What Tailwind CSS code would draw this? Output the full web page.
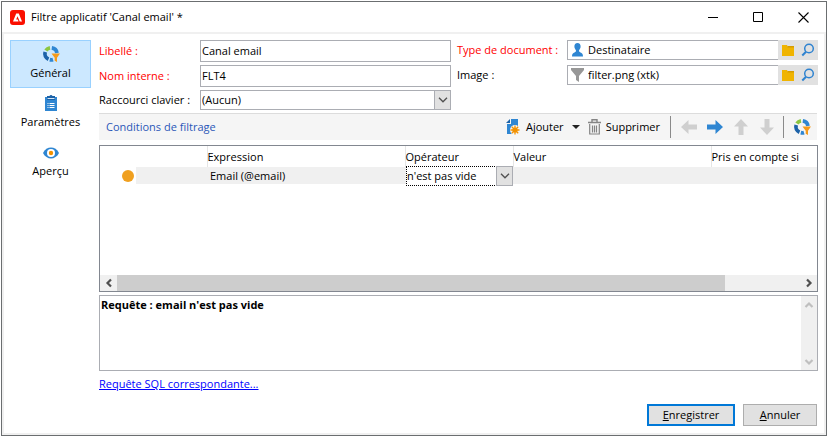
<!DOCTYPE html>
<html lang="fr">
<head>
<meta charset="utf-8">
<meta name="viewport" content="width=device-width, initial-scale=1">
<title>Filtre applicatif 'Canal email'</title>
<script src="https://cdn.jsdelivr.net/npm/@tailwindcss/browser@4"></script>
</head>
<body class="flex min-h-screen flex-col bg-white p-px pb-[2px] text-[11px] leading-4 text-black font-['Open_Sans','Noto_Sans',sans-serif]">
<svg class="hidden" aria-hidden="true">
  <symbol id="folder" viewBox="0 0 12 11"><path d="M0 0h5l1 2h6v9H0z" fill="#f0b400"/><path d="M5.500 1h6.500v1.500H5.500z" fill="#d69c00"/></symbol>
  <symbol id="lens" viewBox="0 0 14 14"><circle cx="8" cy="5.500" r="4.300" fill="none" stroke="#2f83d0" stroke-width="1.500"/><path d="M5 8.700 1.300 12.500" stroke="#2f83d0" stroke-width="2"/></symbol>
  <symbol id="ring" viewBox="0 0 18 18">
    <g fill="none" stroke-width="3.800">
      <path d="M9.800 2.900A6 6 0 0 1 14.900 8" stroke="#2f86d2"/>
      <path d="M3.900 5.600A6 6 0 0 1 8 2.900" stroke="#8cc63f"/>
      <path d="M3.200 7A6 6 0 0 0 6.500 14.300" stroke="#1c62a8"/>
      <path d="M7.800 14.700A6 6 0 0 0 11 14.600" stroke="#2f86d2"/>
    </g>
    <path d="M9.500 8.500H18l-3 4.200V17l-2.300-1.300v-3z" fill="#f59a1b"/>
  </symbol>
  <symbol id="arrow" viewBox="0 0 16 16"><path d="M0 5.500h8.500V1L16 8l-7.500 7v-4.500H0z" fill="currentColor"/></symbol>
  <symbol id="chevron" viewBox="0 0 10 6"><path d="m1 .8 4 4 4-4" fill="none" stroke="currentColor" stroke-width="1.300"/></symbol>
  <symbol id="bold-chevron" viewBox="0 0 10 8"><path d="m1.500 2 3.500 3.500 3.500-3.500" fill="none" stroke="currentColor" stroke-width="2.200"/></symbol>
</svg>

<main class="flex grow flex-col border border-[#6b6e70]">
  <header class="flex h-[30px] items-center pl-2">
    <svg class="mr-[6px] h-[15px] w-[15px]" viewBox="0 0 15 15" aria-hidden="true"><rect width="15" height="15" rx="3" fill="#fa0f00"/><path d="M3 11.500 6.200 3.500h2.600l3.200 8H9.700L7.500 6.200 6.200 9.500h1.600l.8 2z" fill="#fff"/></svg>
    <h1 class="grow">Filtre applicatif 'Canal email' *</h1>
    <button class="flex h-full w-[45px] items-center justify-center" aria-label="Réduire"><svg class="h-[11px] w-[11px]" viewBox="0 0 11 11"><path d="M0 5.500h10" stroke="#000"/></svg></button>
    <button class="flex h-full w-[45px] items-center justify-center" aria-label="Agrandir"><svg class="h-[11px] w-[11px]" viewBox="0 0 11 11"><path d="M.5.500h9v9h-9z" fill="none" stroke="#000"/></svg></button>
    <button class="flex h-full w-[45px] items-center justify-center" aria-label="Fermer"><svg class="h-[11px] w-[11px]" viewBox="0 0 11 11"><path d="m.5.500 10 10m0-10-10 10" stroke="#000" stroke-width="1.100"/></svg></button>
  </header>

  <div class="flex grow border-2 border-[#f0f0f0] px-[6px] pt-[6px] pb-[7px]">
    <nav class="mr-2 flex w-[81px] shrink-0 flex-col gap-px">
      <button class="flex h-12 flex-col items-center justify-end gap-[2px] border border-[#99d1ff] bg-[#cce8ff] pb-[6px]">
        <svg class="h-[18px] w-[18px]"><use href="#ring"/></svg>Général
      </button>
      <button class="flex h-12 flex-col items-center justify-end gap-[2px] pb-[7px]">
        <svg class="h-[18px] w-[14px]" viewBox="0 0 14 18" aria-hidden="true"><path d="M1 3h12v14H1z" fill="#2f86d2"/><path d="M3 2h2.500a1.600 1.600 0 0 1 3 0H11v4H3z" fill="#1c62a8"/><path d="M3.500 4.500h7" stroke="#d5e7f7"/><path d="M3.500 9.500h1m1 0h5m-7 2h1m1 0h5m-7 2h1m1 0h5" stroke="#fff"/></svg>Paramètres
      </button>
      <button class="flex h-12 flex-col items-center justify-end gap-1 pb-[7px]">
        <svg class="h-[12px] w-[16px]" viewBox="0 0 16 12" aria-hidden="true"><path d="M0 6C3.500-1.300 12.500-1.300 16 6 12.500 13.300 3.500 13.300 0 6z" fill="#2f86d2"/><circle cx="8" cy="6" r="4" fill="#fff"/><circle cx="8" cy="6" r="2.200" fill="#f29100"/></svg>Aperçu
      </button>
    </nav>

    <div class="flex min-w-0 grow flex-col">
      <form class="grid grid-cols-[101px_1fr_6px_110px_1fr] gap-y-[3px]">
        <label for="libelle" class="pt-[3px] whitespace-nowrap text-[#ff0000]">Libellé :</label>
        <input id="libelle" value="Canal email" class="h-[22px] w-full min-w-0 border border-[#abadb3] px-px pb-px">
        <label for="type" class="col-start-4 pt-[2px] whitespace-nowrap text-[#ff0000]">Type de document :</label>
        <div class="flex h-5 min-w-0 bg-[#e1e1e1]">
          <div class="flex min-w-0 grow items-center border border-r-0 border-[#abadb3] bg-white pl-1">
            <svg class="mr-[5px] h-[14px] w-[11px] shrink-0" viewBox="0 0 11 14" aria-hidden="true"><path d="M5.500 0C7.500 0 8.800 1.400 8.600 3.800 8.500 5.500 7.500 6.500 7 7.500c0 1 .5 1.500 1.500 2 1.500.6 2.500 1.200 2.500 4H0c0-2.800 1-3.400 2.500-4C3.500 9 4 8.500 4 7.500 3.500 6.500 2.500 5.500 2.400 3.800 2.200 1.400 3.500 0 5.500 0z" fill="#2f86d2"/></svg>
            <input id="type" value="Destinataire" class="w-full min-w-0 grow">
          </div>
          <button type="button" aria-label="Ouvrir le dossier" class="flex w-5 items-center justify-center"><svg class="h-[11px] w-[12px]"><use href="#folder"/></svg></button>
          <button type="button" aria-label="Rechercher" class="flex w-5 items-center justify-center"><svg class="h-[14px] w-[14px]"><use href="#lens"/></svg></button>
        </div>

        <label for="nom" class="pt-[3px] whitespace-nowrap text-[#ff0000]">Nom interne :</label>
        <input id="nom" value="FLT4" class="h-[22px] w-full min-w-0 border border-[#abadb3] px-px pb-px">
        <label for="image" class="col-start-4 pt-[2px] whitespace-nowrap">Image :</label>
        <div class="flex h-5 min-w-0 bg-[#e1e1e1]">
          <div class="flex min-w-0 grow items-center border border-r-0 border-[#abadb3] bg-white pl-[3px]">
            <svg class="mr-1 h-[14px] w-[13px] shrink-0" viewBox="0 0 13 14" aria-hidden="true"><path d="M0 0h13v2L8 8v6l-3-2V8L0 2z" fill="#979797"/></svg>
            <input id="image" value="filter.png (xtk)" class="w-full min-w-0 grow">
          </div>
          <button type="button" aria-label="Ouvrir le dossier" class="flex w-5 items-center justify-center"><svg class="h-[11px] w-[12px]"><use href="#folder"/></svg></button>
          <button type="button" aria-label="Rechercher" class="flex w-5 items-center justify-center"><svg class="h-[14px] w-[14px]"><use href="#lens"/></svg></button>
        </div>

        <label for="raccourci" class="pt-[2px] whitespace-nowrap">Raccourci clavier :</label>
        <div class="grid h-5 grid-cols-[1fr_17px]">
          <select id="raccourci" class="col-span-2 col-start-1 row-start-1 w-full appearance-none border border-[#abadb3] bg-white px-px"><option>(Aucun)</option></select>
          <span class="pointer-events-none col-start-2 row-start-1 flex items-center justify-center border border-[#abadb3] bg-[#e1e1e1] text-[#505050]"><svg class="h-[6px] w-[10px]"><use href="#chevron"/></svg></span>
        </div>
      </form>

      <div class="mt-[3px] mr-px flex h-[27px] items-center border-t border-[#dcdcdc] bg-[#f5f5f5] pl-[7px]">
        <h2 class="grow text-[#2b57b8]">Conditions de filtrage</h2>
        <button class="flex items-center gap-[6px]">
          <svg class="h-[16px] w-[14px]" viewBox="0 0 14 16" aria-hidden="true"><path d="M5 0h7v8l-6 7H1V5h4z" fill="#2f86d2"/><path d="M0 4 4 0v4z" fill="#1c62a8"/><circle cx="9" cy="11" r="5" fill="#f5f5f5"/><path d="M9 6.500v9M4.500 11h9M5.800 7.800l6.400 6.400m0-6.400-6.400 6.400" stroke="#f29100" stroke-width="1.300"/><circle cx="9" cy="11" r="2.600" fill="#f29100"/></svg>Ajouter
        </button>
        <button class="ml-2 flex h-5 w-2 items-center justify-center" aria-label="Options d'ajout"><svg class="h-[4px] w-[8px]" viewBox="0 0 8 4"><path d="M0 0h8L4 4z" fill="#222"/></svg></button>
        <button class="ml-2 flex items-center gap-[5px]">
          <svg class="h-[16px] w-[13px]" viewBox="0 0 13 16" aria-hidden="true"><path d="M0 3.500h13M4 3V.7h5V3" fill="none" stroke="#858585" stroke-width="1.400"/><path d="M1.700 5v10h9.600V5M4.500 6.500v7m2-7v7m2-7v7" fill="none" stroke="#858585" stroke-width="1.200"/></svg>Supprimer
        </button>
        <span class="ml-[10px] h-[22px] w-px bg-[#8a8a8a]"></span>
        <button class="ml-[10px] text-[#cfcfcf]" aria-label="Gauche"><svg class="h-4 w-4 rotate-180"><use href="#arrow"/></svg></button>
        <button class="ml-[10px] text-[#2f86d2]" aria-label="Droite"><svg class="h-4 w-4"><use href="#arrow"/></svg></button>
        <button class="ml-[10px] text-[#cfcfcf]" aria-label="Monter"><svg class="h-4 w-4 -rotate-90"><use href="#arrow"/></svg></button>
        <button class="ml-[10px] text-[#cfcfcf]" aria-label="Descendre"><svg class="h-4 w-4 rotate-90"><use href="#arrow"/></svg></button>
        <span class="ml-2 h-[22px] w-px bg-[#8a8a8a]"></span>
        <button class="mr-[6px] ml-[9px]" aria-label="Filtrer"><svg class="h-[18px] w-[18px]"><use href="#ring"/></svg></button>
      </div>

      <section class="mt-[5px] flex h-[147px] flex-col border border-[#828790]">
        <table class="w-full table-fixed border-collapse text-left">
          <colgroup><col class="w-[36px]"><col class="w-[71px]"><col class="w-[198px]"><col class="w-[108px]"><col class="w-[198px]"><col></colgroup>
          <thead>
            <tr class="h-[21px] whitespace-nowrap">
              <th colspan="2" class="p-0"></th>
              <th class="border-l border-[#e5e5e5] p-0 font-normal">Expression</th>
              <th class="border-l border-[#e5e5e5] p-0 font-normal">Opérateur</th>
              <th class="border-l border-[#e5e5e5] p-0 font-normal">Valeur</th>
              <th class="border-l border-[#e5e5e5] p-0 font-normal">Pris en compte si</th>
            </tr>
          </thead>
          <tbody>
            <tr class="h-[17px]">
              <td class="p-0 pl-[22px]"><span class="block h-3 w-3 rounded-full bg-[#f0a020]"></span></td>
              <td class="bg-[#f0f0f0] p-0"></td>
              <td class="bg-[#f0f0f0] p-0 pl-[3px]">Email (@email)</td>
              <td class="bg-[#f0f0f0] p-0">
                <div class="-mt-px -mb-[2px] ml-px grid h-5 grid-cols-[1fr_17px]">
                  <select aria-label="Opérateur" class="col-span-2 col-start-1 row-start-1 w-full appearance-none border border-dotted border-black bg-white"><option>n'est pas vide</option></select>
                  <span class="pointer-events-none col-start-2 row-start-1 flex items-center justify-center border border-[#abadb3] bg-[#e1e1e1] text-[#505050]"><svg class="h-[6px] w-[10px]"><use href="#chevron"/></svg></span>
                </div>
              </td>
              <td class="bg-[#f0f0f0] p-0"></td>
              <td class="bg-[#f0f0f0] p-0"></td>
            </tr>
          </tbody>
        </table>
        <div class="mt-auto flex h-4 bg-[#f0f0f0] text-[#505050]">
          <button class="flex w-[17px] items-center justify-center" aria-label="Défiler à gauche"><svg class="h-[8px] w-[10px] rotate-90"><use href="#bold-chevron"/></svg></button>
          <div class="grow"><div class="h-full w-[89%] bg-[#cdcdcd]"></div></div>
          <button class="flex w-[17px] items-center justify-center" aria-label="Défiler à droite"><svg class="h-[8px] w-[10px] -rotate-90"><use href="#bold-chevron"/></svg></button>
        </div>
      </section>

      <div class="mt-[3px] flex h-[76px] border border-[#abadb3]">
        <textarea aria-label="Requête" readonly class="min-w-0 grow resize-none overflow-hidden px-px py-px font-bold">Requête : email n'est pas vide</textarea>
        <div class="flex w-4 shrink-0 flex-col justify-between bg-[#f0f0f0] text-[#bfbfbf]">
          <button class="flex h-[17px] items-center justify-center" aria-label="Défiler vers le haut"><svg class="h-[8px] w-[10px] rotate-180"><use href="#bold-chevron"/></svg></button>
          <button class="flex h-[17px] items-center justify-center" aria-label="Défiler vers le bas"><svg class="h-[8px] w-[10px]"><use href="#bold-chevron"/></svg></button>
        </div>
      </div>
      <a href="#" class="mt-[5px] self-start text-[#0000ff] underline">Requête SQL correspondante...</a>

      <footer class="mt-auto flex justify-end gap-2 pr-px">
        <button class="h-[22px] w-[88px] border-2 border-[#0078d7] bg-[#e1e1e1] leading-4"><u>E</u>nregistrer</button>
        <button class="h-[22px] w-[74px] border border-[#adadad] bg-[#e1e1e1] leading-4"><u>A</u>nnuler</button>
      </footer>
    </div>
  </div>
</main>
</body>
</html>
